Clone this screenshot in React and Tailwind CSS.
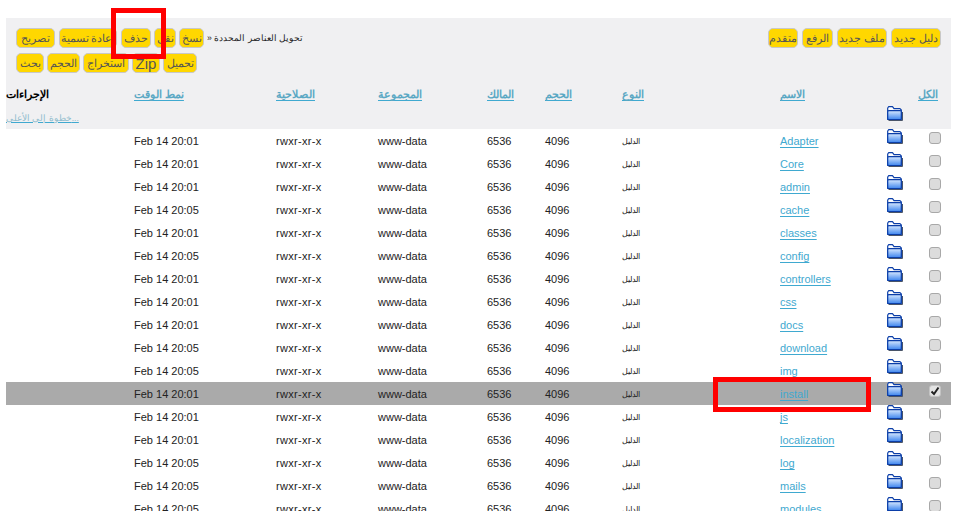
import React from "react";

const names = ["Adapter", "Core", "admin", "cache", "classes", "config", "controllers", "css", "docs", "download", "img", "install", "js", "localization", "log", "mails", "modules"];
const lateRows = ["cache", "config", "download", "img", "log", "mails", "modules"];

const rows = names.map((name) => ({
  name,
  time: lateRows.includes(name) ? "Feb 14 20:05" : "Feb 14 20:01",
  selected: name === "install",
}));

const headers = ["نمط الوقت", "الصلاحية", "المجموعة", "المالك", "الحجم", "النوع", "الاسم"];

function Btn({ children, w, zip }) {
  return (
    <button
      className={`h-5 ${w} shrink-0 rounded-[5px] border border-[#c8c8c8] bg-[#ffd700] text-center leading-[17px] text-[#555] whitespace-nowrap overflow-hidden ${
        zip ? "text-[15px]" : "text-[10.5px]"
      }`}
    >
      {children}
    </button>
  );
}

function Folder() {
  return (
    <svg width="16" height="15" viewBox="0 0 16 15" className="ml-px block">
      <defs>
        <linearGradient id="folderFill" x1="0" y1="0" x2="0" y2="1">
          <stop offset="0" stopColor="#d6e8ff" />
          <stop offset="1" stopColor="#3f86ee" />
        </linearGradient>
      </defs>
      <path d="M0.7 13.5V2L1.7 0.7H5.5L7 2.7H13L14.3 4V13.5Z" fill="#ffffff" stroke="#0b3ea8" strokeWidth="1.2" strokeLinejoin="round" />
      <rect x="0.7" y="4.7" width="13.6" height="8.8" rx="1" fill="url(#folderFill)" stroke="#0b3ea8" strokeWidth="1.2" />
      <path d="M1.5 14.5H15.5V6" fill="none" stroke="#4a5568" strokeWidth="1" />
    </svg>
  );
}

function Checkbox({ checked }) {
  return (
    <span
      className={`flex h-3 w-3 items-center justify-center rounded-[3px] border ${
        checked ? "border-[#c4c4c4] bg-[#e4e4e4]" : "border-[#a8a8a8] bg-[#dcdcdc]"
      }`}
    >
      {checked && (
        <svg width="10" height="10" viewBox="0 0 10 10">
          <path d="M1.5 5.5L4 8L8.5 1.5" fill="none" stroke="#222" strokeWidth="2" />
        </svg>
      )}
    </span>
  );
}

function HeaderLink({ children }) {
  return <a className="text-[10.5px] font-bold text-[#5ba8c4] underline decoration-[#3fa9d0] underline-offset-2">{children}</a>;
}

export default function App() {
  return (
    <div className="relative h-[511px] w-[960px] overflow-hidden bg-white pl-[6px] pr-[9px] pt-[18px] font-['Liberation_Sans',Arial,sans-serif] text-[11px] text-[#222]">
      <div className="flex justify-between bg-[#f0f0f2] pl-[10px] pr-[10px] pt-[10px]">
        <div className="flex w-[300px] flex-col gap-[5px]">
          <div className="flex items-center">
            <Btn w="w-[39px]">تصريح</Btn>
            <div className="ml-[4px]">
              <Btn w="w-[58px]">إعادة تسمية</Btn>
            </div>
            <div className="ml-[4px]">
              <Btn w="w-[30px]">حذف</Btn>
            </div>
            <div className="ml-[3px]">
              <Btn w="w-[22px]">نقل</Btn>
            </div>
            <div className="ml-[3px]">
              <Btn w="w-[25px]">نسخ</Btn>
            </div>
            <span className="ml-[3px] whitespace-nowrap text-[8.6px] text-[#222]" dir="rtl">
              تحويل العناصر المحددة «
            </span>
          </div>
          <div className="flex gap-[3px]">
            <Btn w="w-[28px]">بحث</Btn>
            <Btn w="w-[33px]">الحجم</Btn>
            <Btn w="w-[46px]">استخراج</Btn>
            <Btn w="w-[28px]" zip>
              Zip
            </Btn>
            <Btn w="w-[34px]">تحميل</Btn>
          </div>
        </div>
        <div className="flex gap-[4px]">
          <Btn w="w-[30px]">متقدم</Btn>
          <Btn w="w-[31px]">الرفع</Btn>
          <Btn w="w-[50px]">ملف جديد</Btn>
          <Btn w="w-[50px]">دليل جديد</Btn>
        </div>
      </div>

      <table className="w-[945px] table-fixed border-collapse">
        <colgroup>
          <col className="w-[128px]" />
          <col className="w-[142px]" />
          <col className="w-[102px]" />
          <col className="w-[109px]" />
          <col className="w-[58px]" />
          <col className="w-[77px]" />
          <col className="w-[158px]" />
          <col className="w-[106px]" />
          <col className="w-[32px]" />
          <col className="w-[33px]" />
        </colgroup>
        <thead className="bg-[#f0f0f2]">
          <tr className="h-[31px] align-bottom">
            <th className="pb-[2px] text-left text-[11px] font-bold text-black">الإجراءات</th>
            {headers.map((label) => (
              <th key={label} className="pb-[1px] text-left font-normal">
                <HeaderLink>{label}</HeaderLink>
              </th>
            ))}
            <th />
            <th className="pb-[1px] text-left font-normal">
              <HeaderLink>الكل</HeaderLink>
            </th>
          </tr>
          <tr className="h-[25px]">
            <td className="align-bottom pb-[4px]">
              <a className="whitespace-nowrap text-[8.5px] text-[#8fbccd] underline decoration-[#3fa9d0]">خطوة إلى الأعلى...</a>
            </td>
            <td colSpan="7" />
            <td className="align-top pt-[2px]">
              <Folder />
            </td>
            <td />
          </tr>
        </thead>
        <tbody>
          {rows.map((r) => (
            <tr key={r.name} className={`h-[23px] ${r.selected ? "bg-[#aaaaaa]" : ""}`}>
              <td />
              <td className="pt-[2px]">{r.time}</td>
              <td className="pt-[2px] tracking-[0.3px]">rwxr-xr-x</td>
              <td className="pt-[2px]">www-data</td>
              <td className="pt-[2px]">6536</td>
              <td className="pt-[2px]">4096</td>
              <td className="pt-[2px] text-[8px]">الدليل</td>
              <td className="pt-[2px]">
                <a className="text-[#3fa9d0] underline underline-offset-2">{r.name}</a>
              </td>
              <td className="align-top">
                <Folder />
              </td>
              <td className="align-top pt-[3px] pl-[11px]">
                <Checkbox checked={r.selected} />
              </td>
            </tr>
          ))}
        </tbody>
      </table>

      <div className="pointer-events-none absolute left-[111px] top-[8px] h-[51px] w-[55px] border-[5px] border-[#ff0000]" />
      <div className="pointer-events-none absolute left-[713px] top-[377px] h-[35px] w-[158px] border-[5px] border-[#ff0000]" />
    </div>
  );
}
